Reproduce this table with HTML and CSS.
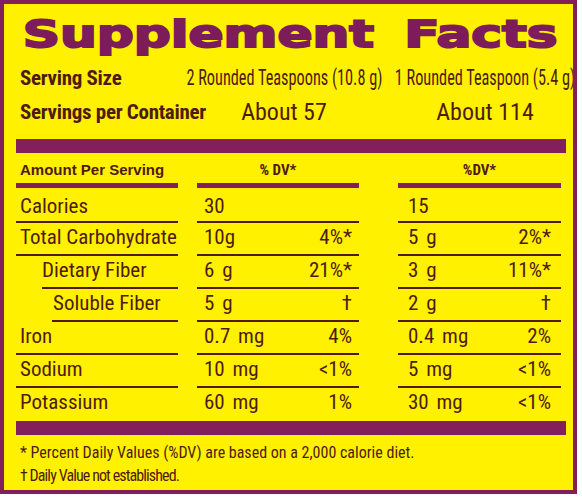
FILE: index.html
```html
<!DOCTYPE html>
<html lang="en">
<head>
  <meta charset="UTF-8">
  <meta name="viewport" content="width=device-width, initial-scale=1.0">
  <title>Supplement Facts</title>
  <link rel="stylesheet" href="styles.css">
</head>
<body>
  <div class="label">
    <h1 class="title">Supplement Facts</h1>

    <div class="serving">
      <span class="serving-label">Serving Size</span>
      <span class="serving-val"><span class="squeeze">2 Rounded Teaspoons (10.8 g)</span></span>
      <span class="serving-val alt"><span class="squeeze">1 Rounded Teaspoon (5.4 g)</span></span>
    </div>
    <div class="serving">
      <span class="serving-label">Servings per Container</span>
      <span class="serving-val big">About 57</span>
      <span class="serving-val alt big">About 114</span>
    </div>

    <div class="bar"></div>

    <div class="facts">
      <div class="head c1">Amount Per Serving</div>
      <div class="head c2 dv">% DV*</div>
      <div class="head c3 dv">%DV*</div>

      <div class="cell c1 first">Calories</div>
      <div class="cell c2 first"><span>30</span><span></span></div>
      <div class="cell c3 first"><span>15</span><span></span></div>

      <div class="cell c1">Total Carbohydrate</div>
      <div class="cell c2"><span>10g</span><span>4%*</span></div>
      <div class="cell c3"><span>5 g</span><span>2%*</span></div>

      <div class="cell c1 indent-1">Dietary Fiber</div>
      <div class="cell c2"><span>6 g</span><span>21%*</span></div>
      <div class="cell c3"><span>3 g</span><span>11%*</span></div>

      <div class="cell c1 indent-2">Soluble Fiber</div>
      <div class="cell c2"><span>5 g</span><span>&dagger;</span></div>
      <div class="cell c3"><span>2 g</span><span>&dagger;</span></div>

      <div class="cell c1">Iron</div>
      <div class="cell c2"><span>0.7 mg</span><span>4%</span></div>
      <div class="cell c3"><span>0.4 mg</span><span>2%</span></div>

      <div class="cell c1">Sodium</div>
      <div class="cell c2"><span>10 mg</span><span>&lt;1%</span></div>
      <div class="cell c3"><span>5 mg</span><span>&lt;1%</span></div>

      <div class="cell c1 last">Potassium</div>
      <div class="cell c2 last"><span>60 mg</span><span>1%</span></div>
      <div class="cell c3 last"><span>30 mg</span><span>&lt;1%</span></div>
    </div>

    <div class="bar bar-bottom"></div>

    <p class="note">* Percent Daily Values (%DV) are based on a 2,000 calorie diet.</p>
    <p class="note note-tight">&dagger; Daily Value not established.</p>
  </div>
</body>
</html>
```

FILE: styles.css
```css
:root {
  --yellow: #fff100;
  --purple: #83205b;
  --title: #7c1c5a;
  --brown: #4f1b0f;
  --narrow: "Roboto Condensed", "Liberation Sans Narrow", "Liberation Sans", Arial, sans-serif;
}

body {
  margin: 0;
  background: #ffffff;
}

.label {
  box-sizing: border-box;
  width: 577px;
  height: 494px;
  padding: 8px 7px 0 12px;
  background: var(--yellow);
  border: 4px solid var(--purple);
  color: var(--brown);
  font-family: var(--narrow);
  overflow: hidden;
}

.title {
  margin: 0;
  padding-left: 5px;
  font-family: "DejaVu Sans", Verdana, sans-serif;
  font-size: 38px;
  font-weight: bold;
  line-height: 44px;
  color: var(--title);
  -webkit-text-stroke: 2px var(--title);
  white-space: nowrap;
  word-spacing: 9px;
  transform: scaleX(1.36);
  transform-origin: left center;
}

.serving {
  display: grid;
  grid-template-columns: 162px 212px 176px;
  font-size: 22px;
  line-height: 34px;
  white-space: nowrap;
}

.serving:first-of-type {
  margin-top: 5px;
}

.serving-label {
  padding-left: 4px;
  font-size: 21px;
  font-weight: bold;
  letter-spacing: -0.3px;
}

.serving-val {
  display: flex;
  justify-content: center;
  min-width: 0;
}

.serving-val.alt {
  padding-left: 14px;
}

.serving-val.big {
  font-size: 24px;
}

.squeeze {
  display: inline-block;
  transform: scaleX(0.74);
}

.bar {
  height: 14px;
  margin-top: 10px;
  background: var(--purple);
}

.bar-bottom {
  margin-top: 2px;
  height: 14px;
}

.facts {
  display: grid;
  grid-template-columns: 162px 181px 202px;
}

.c2 {
  margin-left: 19px;
}

.c3 {
  margin-left: 39px;
}

.head {
  padding-top: 4px;
  line-height: 26px;
  font-size: 15px;
  font-weight: bold;
  border-bottom: 5px solid var(--purple);
}

.head.c1 {
  padding-left: 4px;
  font-family: "Liberation Sans", Arial, sans-serif;
}

.head.dv {
  text-align: center;
}

.cell {
  padding-bottom: 2px;
  font-size: 21px;
  line-height: 29px;
  border-bottom: 2px solid var(--brown);
  white-space: nowrap;
}

.cell.first {
  padding-top: 4px;
  padding-bottom: 0;
}

.cell.last {
  border-bottom: none;
}

.cell.c1 {
  padding-left: 4px;
}

.cell.indent-1 {
  margin-left: 26px;
  padding-left: 0;
}

.cell.indent-2 {
  margin-left: 36px;
  padding-left: 1px;
}

.cell.c2,
.cell.c3 {
  display: flex;
  justify-content: space-between;
  word-spacing: 3px;
}

.cell.c2 {
  padding: 0 7px 2px;
}

.cell.c3 {
  padding: 0 10px 2px;
}

.cell.c2.first,
.cell.c3.first {
  padding-top: 4px;
  padding-bottom: 0;
}

.note {
  margin: 0;
  padding-left: 4px;
  font-size: 16px;
  line-height: 19px;
}

.note:first-of-type {
  margin-top: 8px;
}

.note-tight {
  margin-top: 4px;
  letter-spacing: -0.9px;
}
```
